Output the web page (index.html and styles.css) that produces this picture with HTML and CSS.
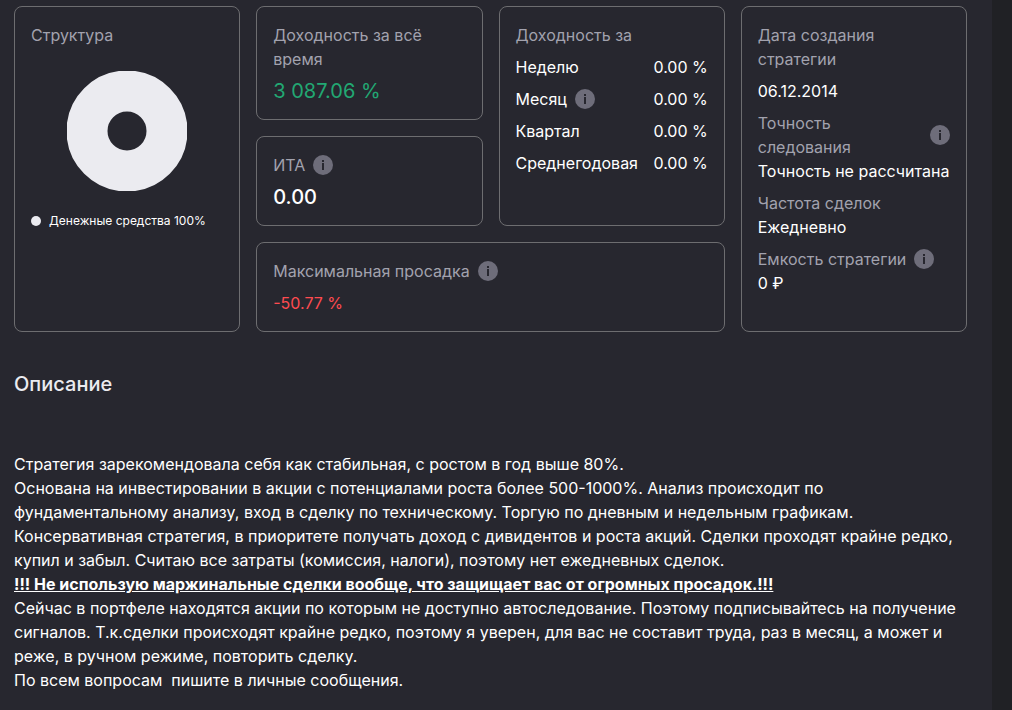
FILE: index.html
```html
<!DOCTYPE html>
<html lang="ru">
<head>
<meta charset="utf-8">
<meta name="viewport" content="width=device-width, initial-scale=1">
<title>Стратегия</title>
<link rel="stylesheet" href="styles.css">
</head>
<body>
<main class="page">
  <section class="cards">
    <article class="card card-structure">
      <h2 class="label">Структура</h2>
      <svg class="donut" viewBox="0 0 120 120" role="img" aria-label="Денежные средства 100%"><circle cx="60" cy="60" r="40" fill="none" stroke="#ebebf0" stroke-width="41"/></svg>
      <p class="legend"><span class="dot"></span>Денежные средства 100%</p>
    </article>
    <article class="card card-total">
      <h2 class="label">Доходность за всё время</h2>
      <p class="total">3 087.06 %</p>
    </article>
    <article class="card card-ita">
      <h2 class="label with-info">ИТА <button class="info" type="button" aria-label="Подробнее об ИТА"><svg viewBox="0 0 20 20"><circle cx="10" cy="10" r="10"/><path d="M9 5h2v2H9zM9 8h2v7H9z"/></svg></button></h2>
      <p class="ita">0.00</p>
    </article>
    <article class="card card-period">
      <h2 class="label">Доходность за</h2>
      <dl class="periods">
        <div class="period"><dt>Неделю</dt><dd>0.00 %</dd></div>
        <div class="period"><dt class="with-info">Месяц <button class="info" type="button" aria-label="Подробнее о доходности за месяц"><svg viewBox="0 0 20 20"><circle cx="10" cy="10" r="10"/><path d="M9 5h2v2H9zM9 8h2v7H9z"/></svg></button></dt><dd>0.00 %</dd></div>
        <div class="period"><dt>Квартал</dt><dd>0.00 %</dd></div>
        <div class="period"><dt>Среднегодовая</dt><dd>0.00 %</dd></div>
      </dl>
    </article>
    <article class="card card-drawdown">
      <h2 class="label with-info">Максимальная просадка <button class="info" type="button" aria-label="Подробнее о просадке"><svg viewBox="0 0 20 20"><circle cx="10" cy="10" r="10"/><path d="M9 5h2v2H9zM9 8h2v7H9z"/></svg></button></h2>
      <p class="drawdown">-50.77 %</p>
    </article>
    <article class="card card-facts">
      <dl class="facts">
        <div class="fact fact-date"><dt class="label">Дата создания стратегии</dt><dd>06.12.2014</dd></div>
        <div class="fact"><dt class="label with-info">Точность следования <button class="info" type="button" aria-label="Подробнее о точности"><svg viewBox="0 0 20 20"><circle cx="10" cy="10" r="10"/><path d="M9 5h2v2H9zM9 8h2v7H9z"/></svg></button></dt><dd>Точность не рассчитана</dd></div>
        <div class="fact"><dt class="label">Частота сделок</dt><dd>Ежедневно</dd></div>
        <div class="fact"><dt class="label with-info">Емкость стратегии <button class="info" type="button" aria-label="Подробнее о ёмкости"><svg viewBox="0 0 20 20"><circle cx="10" cy="10" r="10"/><path d="M9 5h2v2H9zM9 8h2v7H9z"/></svg></button></dt><dd>0 ₽</dd></div>
      </dl>
    </article>
  </section>
  <section class="description">
    <h1 class="title">Описание</h1>
    <div class="text">
      <p>Стратегия зарекомендовала себя как стабильная, с ростом в год выше 80%.</p>
      <p>Основана на инвестировании в акции с потенциалами роста более 500-1000%. Анализ происходит по фундаментальному анализу, вход в сделку по техническому. Торгую по дневным и недельным графикам.</p>
      <p>Консервативная стратегия, в приоритете получать доход с дивидентов и роста акций. Сделки проходят крайне редко, купил и забыл. Считаю все затраты (комиссия, налоги), поэтому нет ежедневных сделок.</p>
      <p><strong class="warning">!!! Не использую маржинальные сделки вообще, что защищает вас от огромных просадок.!!!</strong></p>
      <p>Сейчас в портфеле находятся акции по которым не доступно автоследование. Поэтому подписывайтесь на получение сигналов. Т.к.сделки происходят крайне редко, поэтому я уверен, для вас не составит труда, раз в месяц, а может и реже, в ручном режиме, повторить сделку.</p>
      <p>По всем вопросам&nbsp; пишите в личные сообщения.</p>
    </div>
  </section>
</main>
</body>
</html>
```
FILE: styles.css
```css
* { box-sizing: border-box; }

body {
  margin: 0;
  background: #202125;
  color: #fff;
  font: 400 16px/24px Inter, "Liberation Sans", sans-serif;
}

h1, h2, p, dl, dd { margin: 0; }

.page {
  margin-right: 20px;
  padding: 6px 25px 18px 14px;
  background: #27272f;
}

.cards {
  display: grid;
  grid-template-columns: repeat(4, minmax(0, 1fr));
  grid-template-rows: auto auto auto;
  grid-template-areas:
    "structure total period facts"
    "structure ita period facts"
    "structure drawdown drawdown facts";
  gap: 16px;
}

.card {
  padding: 16px;
  border: 1px solid #6d6d70;
  border-radius: 8px;
}

.card-structure { grid-area: structure; }
.card-total { grid-area: total; }
.card-ita { grid-area: ita; }
.card-period { grid-area: period; }
.card-drawdown { grid-area: drawdown; }
.card-facts { grid-area: facts; }

.label {
  color: #a2a2ae;
  font-size: 16px;
  font-weight: 400;
}

.with-info {
  display: flex;
  align-items: center;
  gap: 8px;
}

.info {
  flex: none;
  width: 20px;
  height: 20px;
  padding: 0;
  border: 0;
  background: none;
  cursor: pointer;
}

.info svg { display: block; }
.info circle { fill: #6e6d7a; }
.info path { fill: #27272f; }

.donut {
  display: block;
  width: 120px;
  margin: 24px auto 16px;
}

.legend {
  display: flex;
  align-items: center;
  gap: 8px;
  padding-top: 2px;
  font-size: 12px;
}

.dot {
  width: 10px;
  height: 10px;
  border-radius: 50%;
  background: #ebebf0;
}

.total {
  margin-top: 8px;
  color: #22a873;
  font-size: 20px;
}

.ita {
  margin-top: 8px;
  font-size: 20px;
  font-weight: 500;
}

.drawdown {
  margin-top: 8px;
  color: #ff4b50;
}

.periods {
  display: grid;
  gap: 8px;
  margin-top: 8px;
}

.period {
  display: flex;
  justify-content: space-between;
}

.facts {
  display: grid;
  gap: 8px;
}

.fact-date {
  display: grid;
  gap: 8px;
}

.description { padding-top: 40px; }

.title {
  color: #ebebf0;
  font-size: 20px;
  font-weight: 500;
}

.text { padding-top: 56px; }

.warning {
  font-weight: 700;
  text-decoration: underline;
}
```
